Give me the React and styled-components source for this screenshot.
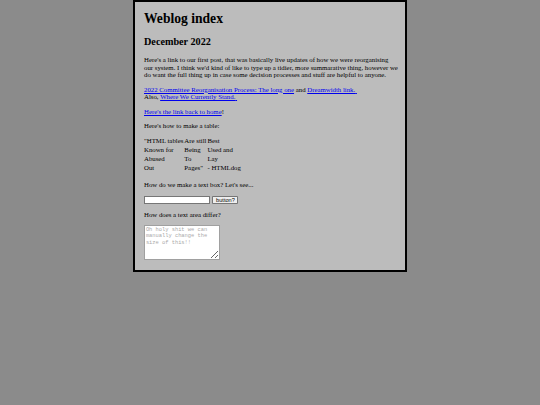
import React from 'react';
import styled, { createGlobalStyle } from 'styled-components';

const GlobalStyle = createGlobalStyle`
  html, body {
    margin: 0;
    padding: 0;
    background: #8b8b8b;
  }
  body {
    font-family: "Liberation Serif", "Times New Roman", serif;
    font-size: 6.8px;
    color: #000;
  }
`;

const Frame = styled.div`
  box-sizing: border-box;
  width: 274px;
  margin: 0 auto;
  padding: 0 4px 3px 9px;
  border: 2px solid #000;
  background: #bcbcbc;
`;
const Title = styled.h1`
  font-size: 13.6px;
  margin: 8.5px 0 9px;
`;
const DateHeading = styled.h2`
  font-size: 10.2px;
  margin: 9.5px 0 9px;
`;
const Para = styled.p`
  margin: 7px 0;
  line-height: 7.5px;
`;
const Link = styled.a`
  color: #0000ee;
  text-decoration: underline;
`;
const QuoteTable = styled.table`
  border-spacing: 1px;
  margin: -1px 0 0 -1px;
  font-size: 6.8px;
`;
const Cell = styled.td`
  padding: 0;
  line-height: 8.3px;
  vertical-align: top;
`;
const TextBox = styled.input`
  zoom: 0.45;
  box-sizing: border-box;
  width: 147px;
  height: 18px;
  margin: 0 5px 0 0;
  padding: 1px 2px;
  border: 1px solid #767676;
  background: #fff;
  vertical-align: middle;
`;
const Button = styled.button`
  zoom: 0.45;
  box-sizing: border-box;
  height: 18px;
  padding: 1px 6px;
  margin: 0;
  border: 1px solid #767676;
  border-radius: 2px;
  background: #efefef;
  font-family: "Liberation Sans", Arial, sans-serif;
  font-size: 12.5px;
  color: #000;
  vertical-align: middle;
`;
const Notes = styled.textarea`
  zoom: 0.45;
  box-sizing: border-box;
  width: 169px;
  height: 77px;
  margin: 0;
  padding: 2px;
  border: 1px solid #a0a0a0;
  background: #fff;
  font-family: "Liberation Mono", "Courier New", monospace;
  font-size: 12px;
  line-height: 14px;
  vertical-align: bottom;
  &::placeholder {
    color: #a9a9a9;
  }
`;

const rows = [
  ['"HTML tables', 'Are still', 'Best'],
  ['Known for', 'Being', 'Used and'],
  ['Abused', 'To', 'Lay'],
  ['Out', 'Pages"', '- HTMLdog'],
];

export default function App() {
  return (
    <>
      <GlobalStyle />
      <Frame>
        <Title>Weblog index</Title>
        <DateHeading>December 2022</DateHeading>
        <Para>
          Here's a link to our first post, that was basically live updates of how we were reorganising
          <br />
          our system. I think we'd kind of like to type up a tidier, more summarative thing, however we
          do want the full thing up in case some decision processes and stuff are helpful to anyone.
        </Para>
        <Para>
          <Link href="#">2022 Committee Reorganisation Process: The long one</Link> and{' '}
          <Link href="#">Dreamwidth link.{'\u00a0'}</Link>
          <br />
          Also, <Link href="#">Where We Currently Stand.{'\u00a0'}</Link>
        </Para>
        <Para>
          <Link href="#">Here's the link back to home</Link>!
        </Para>
        <Para>Here's how to make a table:</Para>
        <QuoteTable>
          <tbody>
            {rows.map((r, i) => (
              <tr key={i}>
                {r.map((c, j) => (
                  <Cell key={j}>{c}</Cell>
                ))}
              </tr>
            ))}
          </tbody>
        </QuoteTable>
        <Para>How do we make a text box? Let's see...</Para>
        <Para>
          <TextBox type="text" />
          <Button type="button">button?</Button>
        </Para>
        <Para>How does a text area differ?</Para>
        <Para>
          <Notes placeholder="Oh holy shit we can manually change the size of this!!" />
        </Para>
      </Frame>
    </>
  );
}
